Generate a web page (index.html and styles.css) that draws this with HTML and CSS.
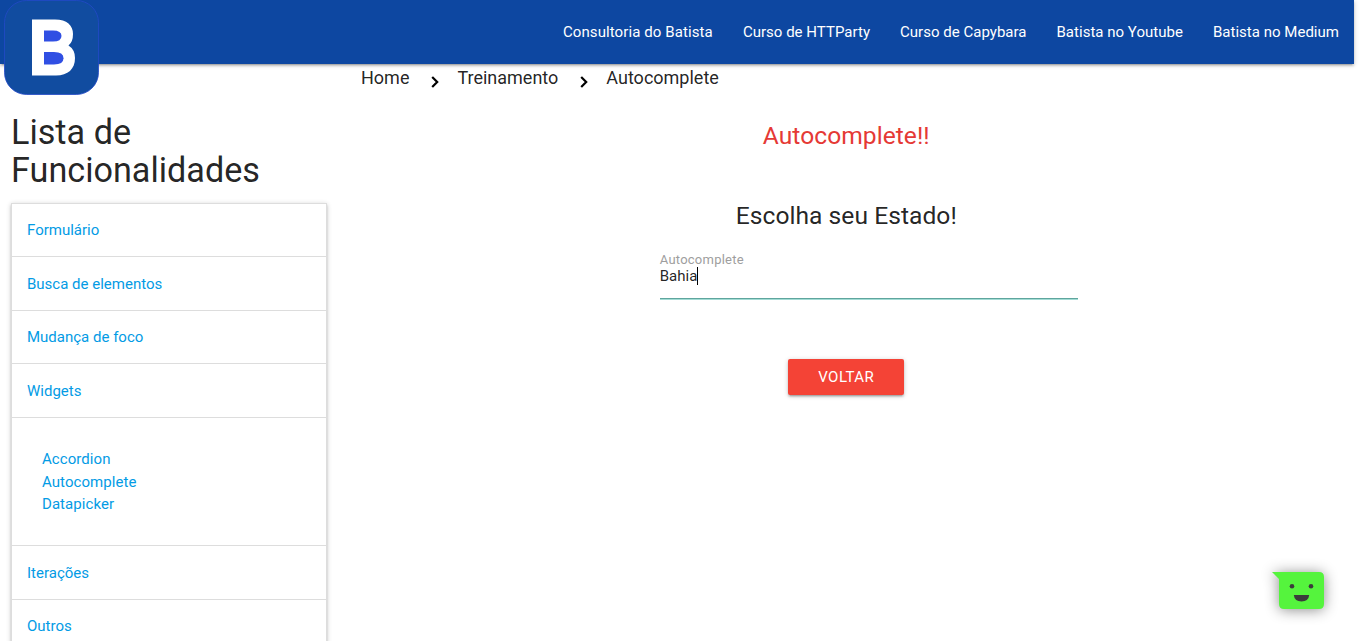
FILE: index.html
```html
<!DOCTYPE html>
<html lang="pt-BR">
<head>
<meta charset="utf-8">
<title>Autocomplete</title>
<link rel="stylesheet" href="styles.css">
</head>
<body>
<div class="page">
  <nav class="navbar">
    <a class="logo" href="#">
      <svg width="95" height="95" viewBox="0 0 95 95">
        <rect x=".5" y=".5" width="94" height="94" rx="22" fill="#114ca0" stroke="#2349c8" stroke-width=".8"/>
        <path d="M28 19.500H51C63 19.500 69 25.500 69 34Q69 42 64.500 45.500Q71 49.500 71 58C71 69 64 75.500 52 75.500H28Z" fill="#fff"/>
        <path d="M40 30.500H49Q57.500 30.500 57.500 36T49 41.500H40Z" fill="#304fe3"/>
        <path d="M40 52H50Q59.500 52 59.500 58.200T50 64.500H40Z" fill="#304fe3"/>
      </svg>
    </a>
    <div class="nav-links">
      <a class="nav-wide" href="#">Consultoria do Batista</a>
      <a href="#">Curso de HTTParty</a>
      <a href="#">Curso de Capybara</a>
      <a href="#">Batista no Youtube</a>
      <a href="#">Batista no Medium</a>
    </div>
  </nav>
  <div class="row">
    <aside class="sidebar">
      <h4 class="sidebar-title">Lista de Funcionalidades</h4>
      <ul class="menu">
        <li class="menu-item"><a href="#">Formulário</a></li>
        <li class="menu-item"><a href="#">Busca de elementos</a></li>
        <li class="menu-item"><a href="#">Mudança de foco</a></li>
        <li class="menu-item"><a href="#">Widgets</a></li>
        <li class="submenu">
          <a href="#">Accordion</a>
          <a href="#">Autocomplete</a>
          <a href="#">Datapicker</a>
        </li>
        <li class="menu-item"><a href="#">Iterações</a></li>
        <li class="menu-item"><a href="#">Outros</a></li>
      </ul>
    </aside>
    <main class="content">
      <div class="breadcrumbs">
        <a href="#">Home</a>
        <svg class="chevron" width="8" height="12" viewBox="0 0 8 12"><path d="M1.200 1L6.200 6L1.200 11" fill="none" stroke="#000" stroke-width="2.200"/></svg>
        <a href="#">Treinamento</a>
        <svg class="chevron" width="8" height="12" viewBox="0 0 8 12"><path d="M1.200 1L6.200 6L1.200 11" fill="none" stroke="#000" stroke-width="2.200"/></svg>
        <a href="#">Autocomplete</a>
      </div>
      <h5 class="title">Autocomplete!!</h5>
      <h5 class="subtitle">Escolha seu Estado!</h5>
      <div class="field">
        <span class="field-label">Autocomplete</span>
        <div class="field-value">Bahia<span class="caret"></span></div>
      </div>
      <a class="button" href="#">VOLTAR</a>
    </main>
  </div>
  <svg class="chat" width="52" height="38" viewBox="0 0 52 38">
    <path d="M0 0H47Q52 0 52 5V32Q52 37 47 37H12Q7 37 7 32V7Z" fill="#55f43d"/>
    <circle cx="20" cy="14.300" r="2.300" fill="#3b3b3b"/>
    <circle cx="39" cy="14.300" r="2.300" fill="#3b3b3b"/>
    <path d="M21.800 23H37.200Q36.500 29.500 29.500 29.500T21.800 23Z" fill="#3b3b3b"/>
  </svg>
</div>
</body>
</html>
```

FILE: styles.css
```css
* { box-sizing: border-box; }
html, body { margin: 0; height: 641px; overflow: hidden; background: #fff; }
body { font: 15px/1.5 Roboto, sans-serif; color: rgba(0,0,0,.87); }
a { color: inherit; text-decoration: none; }
.page { width: 1354px; height: 641px; }
.navbar {
  display: flex; justify-content: space-between; height: 64px; padding-left: 4px;
  background: #0d47a1; color: #fff; line-height: 64px; position: relative;
  box-shadow: 0 2px 2px 0 rgba(0,0,0,.14), 0 3px 1px -2px rgba(0,0,0,.12), 0 1px 5px 0 rgba(0,0,0,.2);
}
.logo, .logo svg { display: block; }
.nav-links { display: flex; letter-spacing: .02px; }
.nav-links a { padding: 0 15px; }
.nav-links .nav-wide { letter-spacing: .1px; }
.row { display: flex; }
.sidebar { width: 338.5px; padding: 50px 11.25px 0 11px; }
.sidebar-title { margin: 0 0 13.5px; font-size: 34.2px; font-weight: 400; line-height: 1.1; }
.menu {
  list-style: none; margin: 0; padding: 0; color: #039be5;
  border: 1px solid #ddd; border-bottom: 0;
  box-shadow: 0 2px 2px 0 rgba(0,0,0,.14), 0 3px 1px -2px rgba(0,0,0,.12), 0 1px 5px 0 rgba(0,0,0,.2);
}
.menu-item { padding: 15.6px 15px 14.4px; border-bottom: 1px solid #ddd; }
.submenu { display: flex; flex-direction: column; padding: 30.6px 30px 29.4px; border-bottom: 1px solid #ddd; letter-spacing: .06px; }
.content { width: 1015.5px; padding: 0 11.25px; display: flex; flex-direction: column; align-items: center; }
.breadcrumbs { display: flex; align-self: stretch; padding-left: 11.25px; font-size: 18px; line-height: 27px; }
.chevron { margin: 12px 18.4px 0 21.6px; }
.title, .subtitle { margin: 0; font-size: 24.6px; font-weight: 400; line-height: 27px; letter-spacing: .04px; }
.title { margin-top: 31px; color: #e53935; }
.subtitle { margin-top: 53px; }
.field { width: 418px; height: 47px; margin: 23px 0 0 45px; border-bottom: 1px solid #5fa59d; box-shadow: 0 1px 0 0 #a3dcd5; }
.field-label { display: block; color: #9e9e9e; font-size: 13px; line-height: 15px; letter-spacing: .24px; }
.field-value { display: flex; align-items: center; line-height: 18px; }
.caret { width: 1px; height: 18px; background: #000; }
.button {
  margin-top: 60px; width: 116px; height: 36px; border-radius: 2px; background: #f44336; color: #fff;
  text-align: center; line-height: 36px; letter-spacing: .5px;
  box-shadow: 0 2px 2px 0 rgba(0,0,0,.14), 0 3px 1px -2px rgba(0,0,0,.12), 0 1px 5px 0 rgba(0,0,0,.2);
}
.chat { position: absolute; left: 1272px; top: 572px; overflow: visible; filter: drop-shadow(0 1px 7px rgba(0,0,0,.45)); }
```
